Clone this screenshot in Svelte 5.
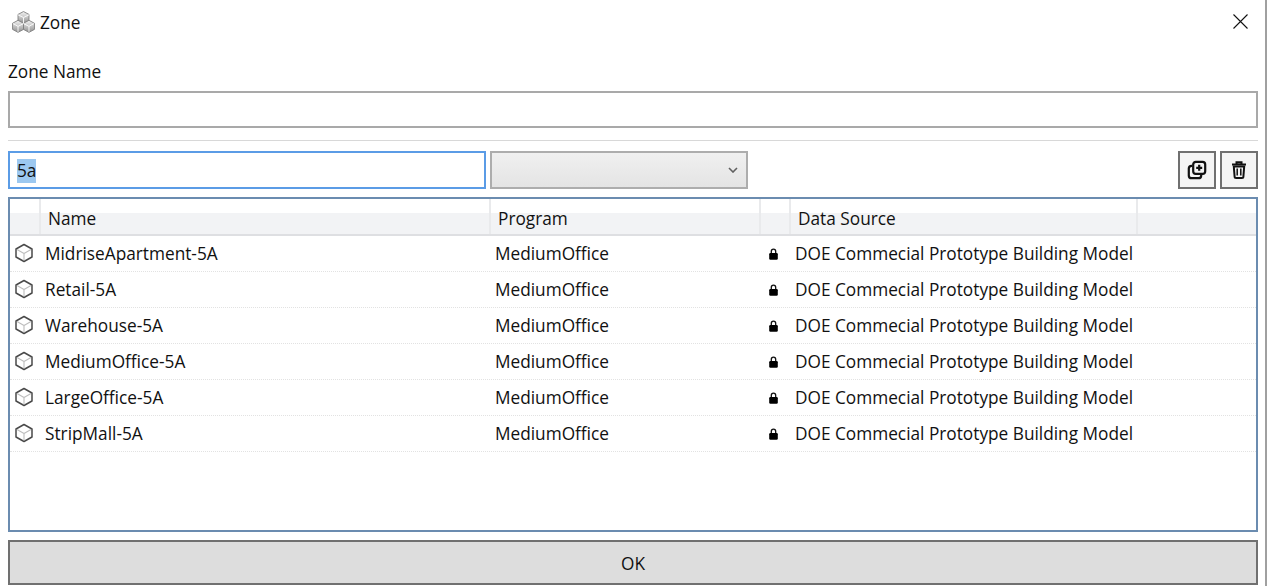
<script>
  const rows = ['MidriseApartment-5A','Retail-5A','Warehouse-5A','MediumOffice-5A','LargeOffice-5A','StripMall-5A'];
</script>

<div class="win">
  <header class="title">
    <svg class="logo" width="23" height="23" viewBox="1.500 2 21 21">
      <defs>
        <linearGradient id="c" x1="0" y1="0" x2="0" y2="1"><stop offset="0" stop-color="#f4f4f4"/><stop offset="1" stop-color="#8f8f8f"/></linearGradient>
      </defs>
      <g stroke="#7d7d7d" stroke-width="0.8" fill="url(#c)" stroke-linejoin="round">
        <path d="M12 2.500l5 2.600v5.600l-5 2.700-5-2.700V5.100z"/>
        <path d="M7 10.500l5 2.700v5.600l-5 2.700-5-2.700v-5.600z"/>
        <path d="M17 10.500l5 2.700v5.600l-5 2.700-5-2.700v-5.600z"/>
      </g>
      <g stroke="#fff" stroke-width="0.8" fill="none">
        <path d="M7 5.500l5 2.500 5-2.500M12 8v5M2.500 13.500l4.500 2.500 5-2.500M7 16v5M12 13.500l5 2.500 4.500-2.500M17 16v5"/>
      </g>
    </svg>
    <span class="title-text">Zone</span>
    <svg class="close" width="15" height="15" viewBox="0 0 15 15"><path d="M.5.500l14 14M14.500.500l-14 14" stroke="#111" stroke-width="1.100" fill="none"/></svg>
  </header>

  <div class="body">
    <div class="label">Zone Name</div>
    <div class="field name-field"></div>
    <div class="rule"></div>

    <div class="filters">
      <div class="search"><span class="sel">5a</span></div>
      <div class="combo">
        <svg width="10" height="6" viewBox="0 0 10 6"><path d="M1 1l4 4 4-4" fill="none" stroke="#606060" stroke-width="1.600"/></svg>
      </div>
      <div class="tools">
        <button class="tool" aria-label="Duplicate">
          <svg width="20" height="20" viewBox="0 0 20 20" fill="none" stroke="#111" stroke-width="2.200">
            <rect x="6.200" y="1.800" width="12" height="12" rx="2.600"/>
            <path d="M5.200 5.800h-.6a2.800 2.800 0 0 0-2.800 2.800v6.800a2.800 2.800 0 0 0 2.800 2.800h6.800a2.800 2.800 0 0 0 2.800-2.800v-.6"/>
            <path d="M12.200 4.800v6M9.200 7.800h6"/>
          </svg>
        </button>
        <button class="tool" aria-label="Delete">
          <svg width="20" height="20" viewBox="0 0 20 20" fill="none" stroke="#111" stroke-width="2">
            <path d="M3 4.500h14M7.500 4V2.200h5V4"/>
            <path d="M4.800 6.500l.8 10a1.500 1.500 0 0 0 1.500 1.500h5.800a1.500 1.500 0 0 0 1.500-1.500l.8-10z"/>
            <path d="M8.200 8.500v7M11.800 8.500v7" stroke-width="1.500"/>
          </svg>
        </button>
      </div>
    </div>

    <div class="table">
      <div class="thead">
        <div class="th c-icon"></div>
        <div class="th c-name">Name</div>
        <div class="th c-prog">Program</div>
        <div class="th c-lock"></div>
        <div class="th c-src">Data Source</div>
        <div class="th c-rest"></div>
      </div>
      {#each rows as r}
        <div class="row">
          <div class="c-icon cell-icon">
            <svg width="20" height="20" viewBox="0 0 20 20" fill="none" stroke-linejoin="round">
              <path d="M10 1.500l8 4.500v8l-8 4.500L2 14V6z" stroke="#4a4a4a" stroke-width="1.500"/>
              <path d="M3 6.600L10 10.500l7-3.900M10 10.500v7" stroke="#bdbdbd" stroke-width="1.100"/>
            </svg>
          </div>
          <div class="c-name td name-td">{r}</div>
          <div class="c-prog td prog-td">MediumOffice</div>
          <div class="c-lock cell-lock">
            <svg width="9" height="12" viewBox="0 0 9 12"><path d="M2.300 5.500V3.400a2.200 2.200 0 0 1 4.400 0v2.100" fill="none" stroke="#111" stroke-width="1.300"/><rect x="0.200" y="5" width="8.600" height="6.800" rx="1.200" fill="#000"/></svg>
          </div>
          <div class="c-src td src-td">DOE Commecial Prototype Building Model</div>
        </div>
      {/each}
    </div>

    <button class="ok">OK</button>
  </div>
  <div class="edge"></div>
</div>

<style>
  :global(body) { margin: 0; background: #fff; }
  .win {
    width: 1267px; height: 586px; position: relative; overflow: hidden; background: #fff;
    font-family: "Open Sans", "Noto Sans", sans-serif; font-size: 17.25px; color: #111;
  }
  .edge { position: absolute; top: 0; bottom: 0; right: 0; width: 2px; background: #a0a0a0; }
  .title { height: 45px; display: flex; align-items: center; padding: 0 19px 0 12px; box-sizing: border-box; }
  .logo { margin-right: 5px; }
  .title-text { flex: 1; }
  .close { margin-top: -2px; }
  .body { padding: 0 9px 0 8px; }
  .label { height: 46px; box-sizing: border-box; padding-top: 15px; line-height: 24px; }
  .field { height: 37px; box-sizing: border-box; border: 2px solid #a9a9a9; }
  .rule { height: 1px; background: #d8d8d8; margin-top: 12px; }
  .filters { display: flex; margin-top: 10px; height: 38px; gap: 4px; }
  .search {
    width: 478px; box-sizing: border-box; border: 2px solid #5b9ce6; display: flex; align-items: center; padding: 1px 0 0 7px;
  }
  .sel { background: #9cc8f0; line-height: 24px; }
  .combo {
    width: 258px; box-sizing: border-box; border: 2px solid #adadad; background: linear-gradient(#f0f0f0, #e4e4e4);
    display: flex; align-items: center; justify-content: flex-end; padding-right: 8px;
  }
  .tools { margin-left: auto; display: flex; gap: 4px; }
  .tool {
    width: 38px; height: 38px; box-sizing: border-box; border: 2px solid #707070; background: #f4f4f4; padding: 0;
    display: flex; align-items: center; justify-content: center;
  }
  .table {
    margin-top: 8px; height: 335px; box-sizing: border-box; border: 2px solid #6b8cb0; background: #fff;
  }
  .thead {
    display: flex; height: 37px; box-sizing: border-box; border-bottom: 2px solid #dedfe2;
    background: linear-gradient(#fff 0, #fff 40%, #f2f3f5 41%, #f2f3f5 100%);
  }
  .th { box-sizing: border-box; border-right: 2px solid #e9eaec; padding-left: 7px; line-height: 39px; }
  .c-icon { width: 31px; flex: none; }
  .c-name { width: 450px; flex: none; }
  .c-prog { width: 270px; flex: none; }
  .c-lock { width: 30px; flex: none; }
  .c-src { width: 347px; flex: none; }
  .c-rest { flex: 1; border-right: 0; }
  .row { display: flex; height: 36px; box-sizing: border-box; border-bottom: 1px dotted #e2e2e2; align-items: center; }
  .cell-icon { display: flex; justify-content: flex-start; padding-left: 4px; box-sizing: border-box; }
  .cell-icon svg { transform: translateY(-1px); }
  .td { box-sizing: border-box; white-space: nowrap; }
  .name-td { padding-left: 4px; }
  .prog-td { padding-left: 4px; }
  .src-td { padding-left: 4px; }
  .cell-lock { display: flex; justify-content: center; padding-right: 6px; box-sizing: border-box; }
  .ok {
    display: block; width: 100%; height: 45px; margin-top: 8px; box-sizing: border-box; border: 2px solid #707070;
    background: #dddddd; font: inherit; color: #111; padding: 2px 0 0;
  }
</style>
